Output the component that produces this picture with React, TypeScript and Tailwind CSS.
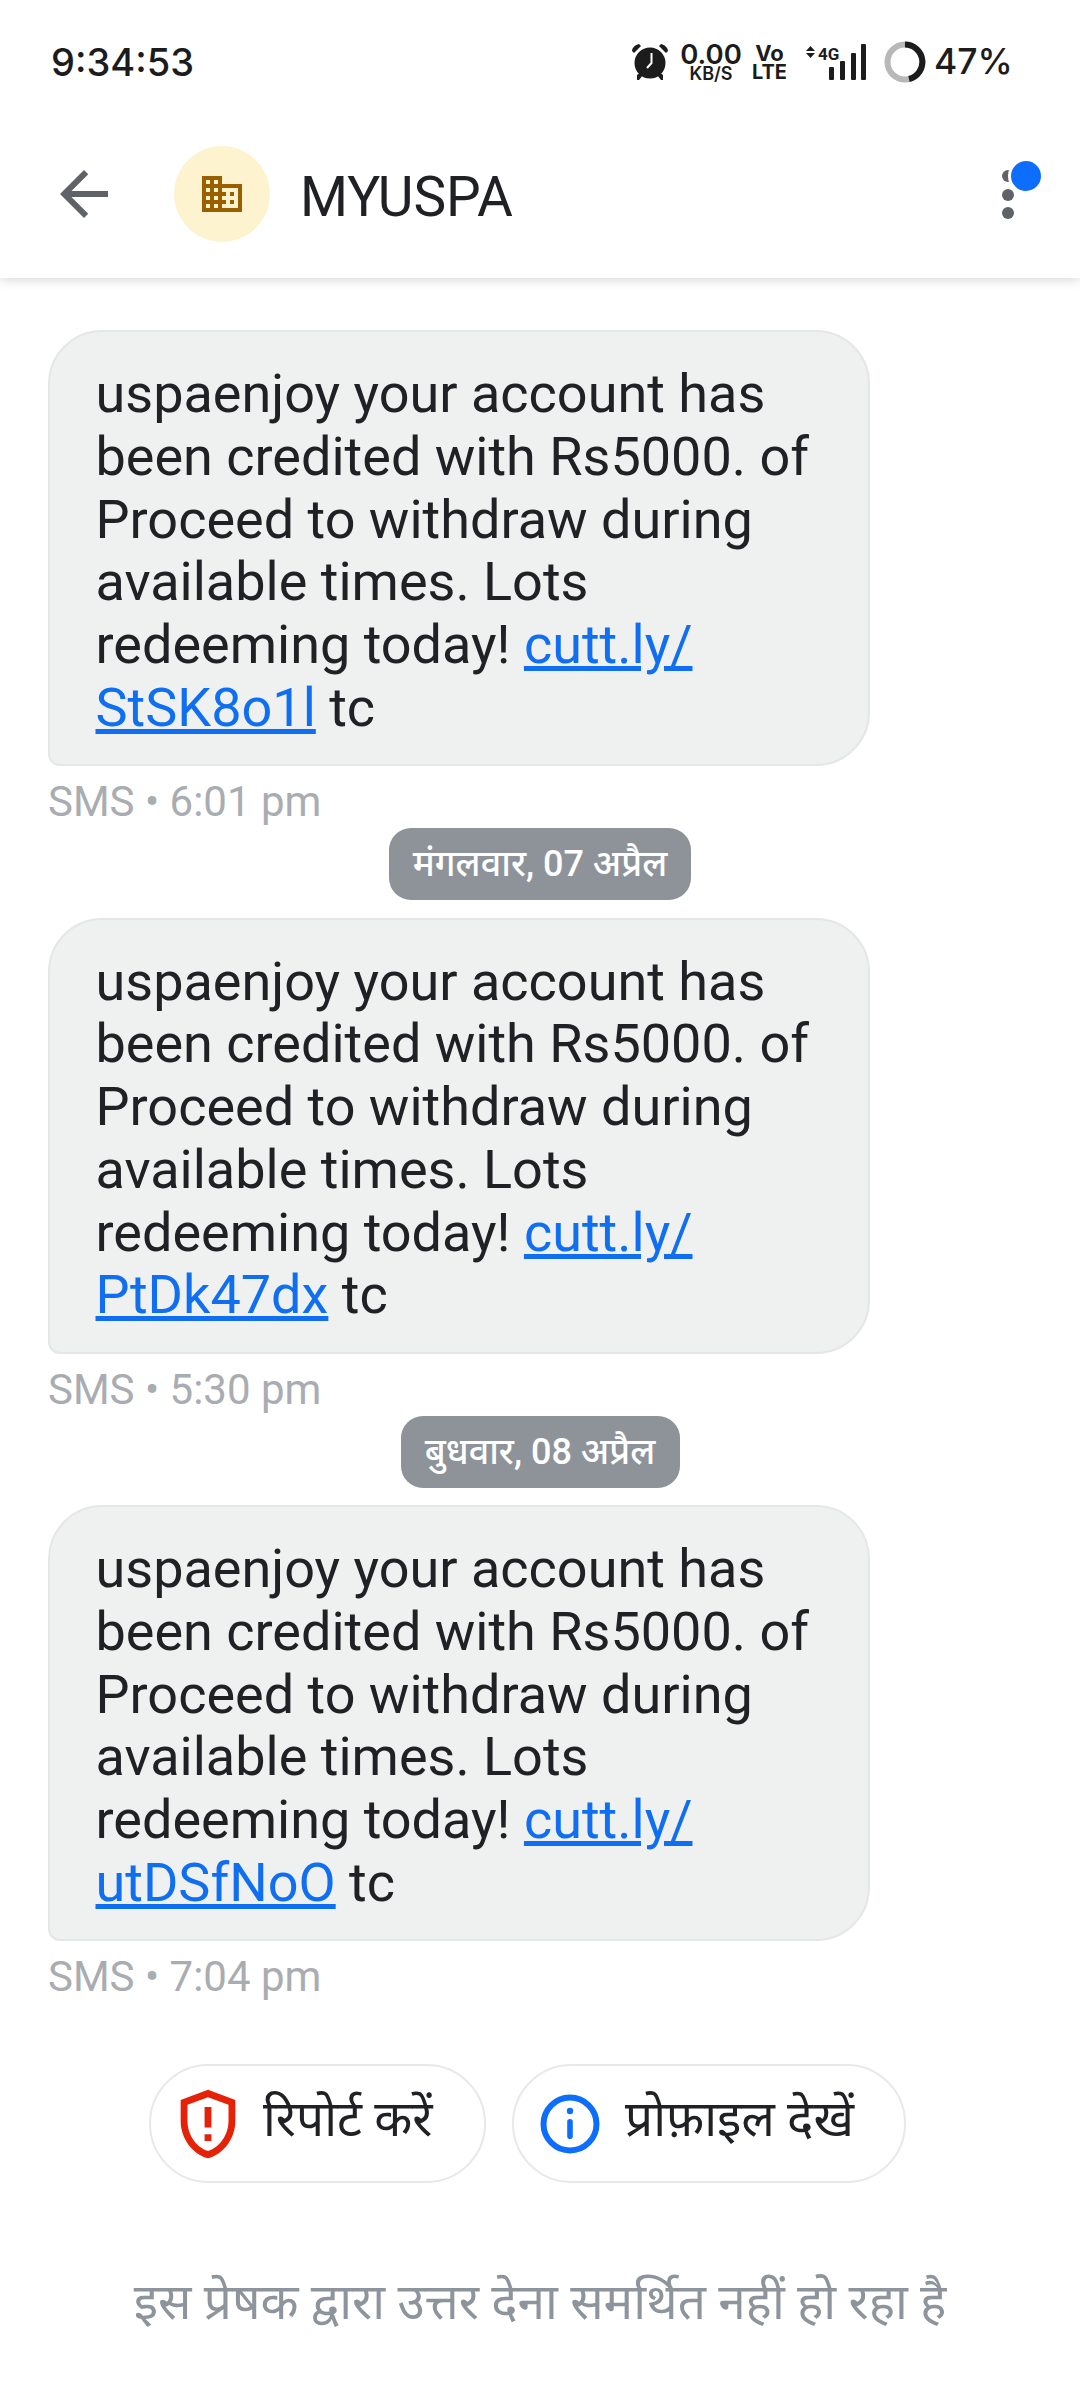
const FONT = "font-['Roboto','Noto_Sans',sans-serif]";

function Bubble({ code, time }: { code: string; time: string }) {
  return (
    <div className="flex flex-col">
      <div className="ml-[48px] w-[822px] h-[436px] box-border border-2 border-[#e4e6e8] bg-[#eff0f0] rounded-[54px] rounded-bl-[12px] pl-[45.5px] pt-[31px] text-[54px] leading-[62.8px] text-[#202124]">
        <div>uspaenjoy your account has</div>
        <div>been credited with Rs5000. of</div>
        <div>Proceed to withdraw during</div>
        <div>available times. Lots</div>
        <div>
          redeeming today! <span className="text-[#106ff0] underline">cutt.ly/</span>
        </div>
        <div>
          <span className="text-[#106ff0] underline">{code}</span> tc
        </div>
      </div>
      <div className="ml-[48px] mt-[13px] text-[42px] leading-[46px] text-[#a9acb1]">SMS • {time}</div>
    </div>
  );
}

function Chip({ label, w }: { label: string; w: string }) {
  return (
    <div className="flex justify-center mt-[3px] mb-[17.5px]">
      <div className={`${w} h-[72px] rounded-[22px] bg-[#8e9399] text-white text-[36px] font-medium flex items-center justify-center`}>
        {label}
      </div>
    </div>
  );
}

function StatusIcons() {
  return (
    <div className="flex items-center h-[44px] text-[#1c1c1c] font-['Inter','Roboto',sans-serif]">
      <svg width="40" height="40" viewBox="0 0 40 40" className="mr-[11px]">
        <path d="M2 9c0-3 3-6 7-7l2 2-7 7zM38 9c0-3-3-6-7-7l-2 2 7 7z" fill="#1c1c1c" />
        <circle cx="20" cy="21" r="15.500" fill="#1c1c1c" />
        <path d="M7 33l4-3 2 3-4 5H7zM33 33l-4-3-2 3 4 5h2z" fill="#1c1c1c" />
        <path d="M21.500 11v10L17 26" stroke="#fff" strokeWidth="2" fill="none" />
      </svg>
      <div className="flex flex-col items-center w-[60px] mr-[12px] font-semibold">
        <span className="text-[27.5px] leading-[23px]">0.00</span>
        <span className="text-[18px] leading-[16px]">KB/S</span>
      </div>
      <div className="flex flex-col items-center w-[33px] mr-[20px] font-bold">
        <span className="text-[22px] leading-[20px]">Vo</span>
        <span className="text-[20px] leading-[19px]">LTE</span>
      </div>
      <svg width="60" height="40" viewBox="0 0 60 40" className="mr-[18px]">
        <path d="M0 9l4.500-5 4.500 5zM0 11l4.500 5 4.500-5z" fill="#1c1c1c" />
        <rect x="23" y="25" width="5" height="13" rx="1" fill="#1c1c1c" />
        <rect x="34" y="19" width="5" height="19" rx="1" fill="#1c1c1c" />
        <rect x="45" y="11" width="5" height="27" rx="1" fill="#1c1c1c" />
        <rect x="55" y="2" width="5" height="36" rx="1" fill="#1c1c1c" />
        <text x="12" y="18" fontSize="17" fontWeight="700" fill="#1c1c1c" fontFamily="Roboto">4G</text>
      </svg>
      <svg width="42" height="42" viewBox="0 0 42 42" className="mr-[8px]">
        <circle cx="21" cy="21" r="17.500" fill="none" stroke="#b8b8b8" strokeWidth="6" />
        <path d="M21 3.500A17.500 17.500 0 0 1 25 38" fill="none" stroke="#1c1c1c" strokeWidth="6" />
      </svg>
      <span className="w-[76px] text-[35.5px] font-medium whitespace-nowrap">47%</span>
    </div>
  );
}

export default function App() {
  return (
    <div className={`${FONT} w-[1080px] h-[2400px] bg-white overflow-hidden flex flex-col`}>
      <div className="h-[278px] shrink-0 bg-white shadow-[0_2px_10px_rgba(0,0,0,0.16)] relative z-10 flex flex-col">
        <div className="h-[146px] pl-[51px] pr-[70px] pt-[40px] flex justify-between items-start">
          <span className="text-[38px] leading-[44px] font-medium font-['Inter','Roboto',sans-serif] text-[#1c1c1c]">9:34:53</span>
          <StatusIcons />
        </div>
        <div className="flex items-center h-[96px] relative">
          <svg width="72" height="72" viewBox="0 0 24 24" className="ml-[48px]" fill="#5f6368">
            <path d="M20 11H7.830l5.590-5.590L12 4l-8 8 8 8 1.410-1.410L7.830 13H20v-2z" />
          </svg>
          <div className="ml-[54px] w-[96px] h-[96px] rounded-full bg-[#fef3cf] flex items-center justify-center">
            <svg width="48" height="48" viewBox="0 0 24 24" fill="#9a6000">
              <path d="M12 7V3H2v18h20V7H12zM6 19H4v-2h2v2zm0-4H4v-2h2v2zm0-4H4V9h2v2zm0-4H4V5h2v2zm4 12H8v-2h2v2zm0-4H8v-2h2v2zm0-4H8V9h2v2zm0-4H8V5h2v2zm10 12h-8v-2h2v-2h-2v-2h2v-2h-2V9h8v10zm-2-8h-2v2h2v-2zm0 4h-2v2h2v-2z" />
            </svg>
          </div>
          <span className="ml-[30px] mt-[6px] text-[55px] text-[#202124]">MYUSPA</span>
          <div className="absolute left-[1002px] top-[24px] flex flex-col gap-[6.500px]">
            <div className="w-[12px] h-[12px] rounded-full bg-[#5f6368]" />
            <div className="w-[12px] h-[12px] rounded-full bg-[#5f6368]" />
            <div className="w-[12px] h-[12px] rounded-full bg-[#5f6368]" />
          </div>
          <div className="absolute left-[1008px] top-[12px] w-[30px] h-[30px] rounded-full bg-[#0d6efd] border-[3px] border-white box-content" />
        </div>
      </div>

      <div className="flex flex-col pt-[52px]">
        <Bubble code="StSK8o1l" time="6:01 pm" />
        <Chip label="मंगलवार, 07 अप्रैल" w="w-[302px]" />
        <Bubble code="PtDk47dx" time="5:30 pm" />
        <Chip label="बुधवार, 08 अप्रैल" w="w-[279px]" />
        <Bubble code="utDSfNoO" time="7:04 pm" />

        <div className="flex pl-[149px] gap-[26px] mt-[64px]">
          <div className="w-[337px] h-[119px] box-border border-2 border-[#e6e8ea] rounded-full flex items-center pl-[16px]">
            <svg width="82" height="82" viewBox="0 0 24 24" fill="#e52207">
              <path d="M12 2 4 5v6.090c0 5.050 3.410 9.760 8 10.910 4.590-1.150 8-5.860 8-10.910V5l-8-3zm6 9.090c0 4-2.550 7.700-6 8.830-3.450-1.130-6-4.820-6-8.830v-4.700l6-2.250 6 2.250v4.700z" />
              <path d="M11 15h2v2h-2zM11 7h2v6h-2z" />
            </svg>
            <span className="ml-[14px] mb-[8px] text-[49.5px] text-[#202124]">रिपोर्ट करें</span>
          </div>
          <div className="w-[394px] h-[119px] box-border border-2 border-[#e6e8ea] rounded-full flex items-center pl-[26px]">
            <svg width="60" height="60" viewBox="0 0 60 60">
              <circle cx="30" cy="30" r="26.500" fill="none" stroke="#0d6efd" strokeWidth="6" />
              <circle cx="30" cy="17" r="3.200" fill="#0d6efd" />
              <rect x="27.200" y="25" width="5.600" height="20" rx="2.800" fill="#0d6efd" />
            </svg>
            <span className="ml-[25px] mb-[8px] text-[49.5px] text-[#202124]">प्रोफ़ाइल देखें</span>
          </div>
        </div>

        <div className="mt-[82px] text-center text-[49.500px] text-[#8d949c]">इस प्रेषक द्वारा उत्तर देना समर्थित नहीं हो रहा है</div>
      </div>
    </div>
  );
}
